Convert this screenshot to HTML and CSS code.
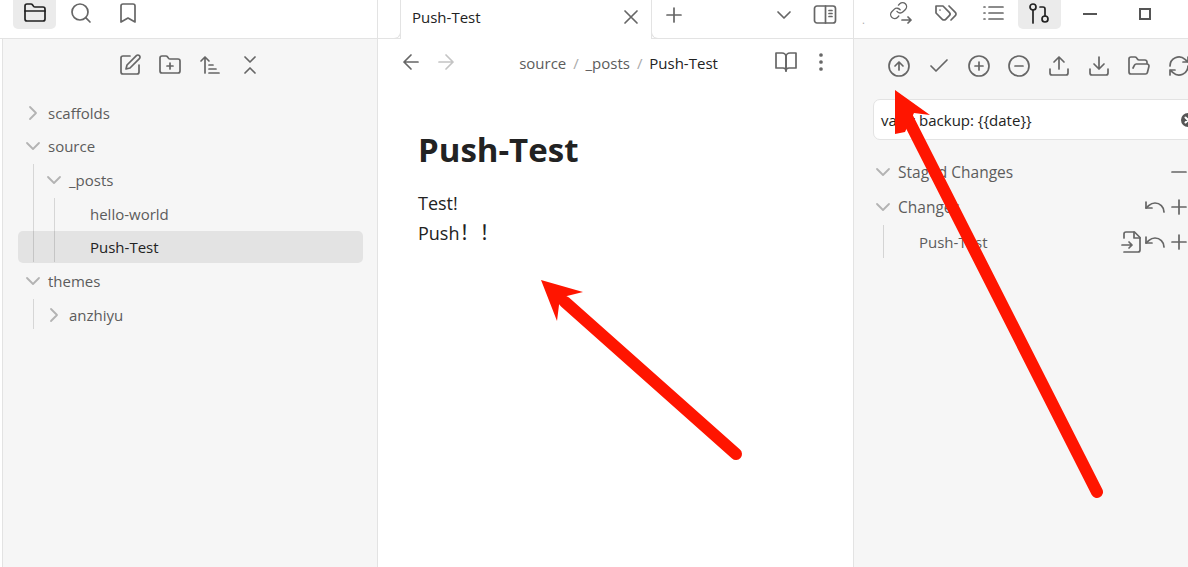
FILE: index.html
```html
<!DOCTYPE html>
<html lang="en">
<head>
  <meta charset="UTF-8" />
  <title>Push-Test</title>
  <link rel="stylesheet" href="styles.css">
</head>
<body>
  <svg width="0" height="0" class="sprites">
    <symbol id="i-folder" viewBox="0 0 24 24"><path d="M20 20a2 2 0 0 0 2-2V8a2 2 0 0 0-2-2h-7.900a2 2 0 0 1-1.690-.9L9.600 3.900A2 2 0 0 0 7.930 3H4a2 2 0 0 0-2 2v13a2 2 0 0 0 2 2Z"/><path d="M2 10h20"/></symbol>
    <symbol id="i-search" viewBox="0 0 24 24"><circle cx="11" cy="11" r="8"/><path d="m21 21-4.300-4.300"/></symbol>
    <symbol id="i-bookmark" viewBox="0 0 24 24"><path d="m19 21-7-4-7 4V5a2 2 0 0 1 2-2h10a2 2 0 0 1 2 2v16z"/></symbol>
    <symbol id="i-edit" viewBox="0 0 24 24"><path d="M12 3H5a2 2 0 0 0-2 2v14a2 2 0 0 0 2 2h14a2 2 0 0 0 2-2v-7"/><path d="M18.375 2.625a2.121 2.121 0 1 1 3 3L12 15l-4 1 1-4Z"/></symbol>
    <symbol id="i-folder-plus" viewBox="0 0 24 24"><path d="M20 20a2 2 0 0 0 2-2V8a2 2 0 0 0-2-2h-7.900a2 2 0 0 1-1.690-.9L9.600 3.900A2 2 0 0 0 7.930 3H4a2 2 0 0 0-2 2v13a2 2 0 0 0 2 2Z"/><path d="M12 10v6M9 13h6"/></symbol>
    <symbol id="i-sort" viewBox="0 0 24 24"><path d="m3 8 4-4 4 4M7 4v16M11 12h4M11 16h7M11 20h10"/></symbol>
    <symbol id="i-collapse" viewBox="0 0 24 24"><path d="m7 20 5-5 5 5M7 4l5 5 5-5"/></symbol>
    <symbol id="i-chev-down" viewBox="0 0 24 24"><path d="m6 9 6 6 6-6"/></symbol>
    <symbol id="i-chev-right" viewBox="0 0 24 24"><path d="m9 6 6 6-6 6"/></symbol>
    <symbol id="i-x" viewBox="0 0 24 24"><path d="M18 6 6 18M6 6l12 12"/></symbol>
    <symbol id="i-plus" viewBox="0 0 24 24"><path d="M5 12h14M12 5v14"/></symbol>
    <symbol id="i-minus" viewBox="0 0 24 24"><path d="M5 12h14"/></symbol>
    <symbol id="i-sidebar" viewBox="0 0 24 24"><rect x="1.500" y="3" width="21" height="17" rx="2.500"/><path d="M12.500 3v17M16 7.500h3M16 10.500h3M16 13.500h3"/></symbol>
    <symbol id="i-left" viewBox="0 0 24 24"><path d="m12 19-7-7 7-7M19 12H5"/></symbol>
    <symbol id="i-right" viewBox="0 0 24 24"><path d="M5 12h14M12 5l7 7-7 7"/></symbol>
    <symbol id="i-book" viewBox="0 0 24 24"><path d="M2 3h6a4 4 0 0 1 4 4v14a3 3 0 0 0-3-3H2z"/><path d="M22 3h-6a4 4 0 0 0-4 4v14a3 3 0 0 1 3-3h7z"/></symbol>
    <symbol id="i-more" viewBox="0 0 24 24"><circle cx="12" cy="5" r="1"/><circle cx="12" cy="12" r="1"/><circle cx="12" cy="19" r="1"/></symbol>
    <symbol id="i-link" viewBox="0 0 24 24"><g transform="translate(1 0) scale(.8)"><path d="M10 13a5 5 0 0 0 7.540.54l3-3a5 5 0 0 0-7.070-7.070l-1.720 1.710"/><path d="M14 11a5 5 0 0 0-7.540-.54l-3 3a5 5 0 0 0 7.070 7.070l1.710-1.710"/></g><path d="M14 19h9M20 16l3 3-3 3"/></symbol>
    <symbol id="i-tags" viewBox="0 0 24 24"><path d="M9 5H2v7l6.290 6.290c.94.94 2.480.94 3.420 0l3.580-3.580c.94-.94.94-2.480 0-3.420L9 5Z"/><path d="M6 9.010V9"/><path d="m15 5 6.300 6.300a2.400 2.400 0 0 1 0 3.400L17 19"/></symbol>
    <symbol id="i-list" viewBox="0 0 24 24"><path d="M8 6h14M8 12h14M8 18h14M3 6h1M3 12h1M3 18h1"/></symbol>
    <symbol id="i-branch" viewBox="0 0 24 24"><circle cx="6" cy="6" r="3"/><path d="M6 9v13"/><circle cx="18" cy="18" r="3"/><path d="M13 6h3a2 2 0 0 1 2 2v7"/></symbol>
    <symbol id="i-up-circle" viewBox="0 0 24 24"><circle cx="12" cy="12" r="10"/><path d="m16 12-4-4-4 4M12 16V8"/></symbol>
    <symbol id="i-check" viewBox="0 0 24 24"><path d="M20 6 9 17l-5-5"/></symbol>
    <symbol id="i-plus-circle" viewBox="0 0 24 24"><circle cx="12" cy="12" r="10"/><path d="M8 12h8M12 8v8"/></symbol>
    <symbol id="i-minus-circle" viewBox="0 0 24 24"><circle cx="12" cy="12" r="10"/><path d="M8 12h8"/></symbol>
    <symbol id="i-upload" viewBox="0 0 24 24"><path d="M21 15v4a2 2 0 0 1-2 2H5a2 2 0 0 1-2-2v-4M17 8l-5-5-5 5M12 3v12"/></symbol>
    <symbol id="i-download" viewBox="0 0 24 24"><path d="M21 15v4a2 2 0 0 1-2 2H5a2 2 0 0 1-2-2v-4M7 10l5 5 5-5M12 15V3"/></symbol>
    <symbol id="i-folder-open" viewBox="0 0 24 24"><path d="m6 14 1.500-2.900A2 2 0 0 1 9.240 10H20a2 2 0 0 1 1.940 2.500l-1.540 6a2 2 0 0 1-1.950 1.500H4a2 2 0 0 1-2-2V5a2 2 0 0 1 2-2h3.900a2 2 0 0 1 1.690.9l.81 1.200a2 2 0 0 0 1.670.9H18a2 2 0 0 1 2 2v2"/></symbol>
    <symbol id="i-refresh" viewBox="0 0 24 24"><path d="M3 12a9 9 0 0 1 15-6.700L21 8M21 3v5h-5M21 12a9 9 0 0 1-15 6.700L3 16M8 16H3v5"/></symbol>
    <symbol id="i-undo" viewBox="0 0 24 24"><path d="M3 7v6h6"/><path d="M21 17a9 9 0 0 0-9-9 9 9 0 0 0-6 2.300L3 13"/></symbol>
    <symbol id="i-file-in" viewBox="0 0 24 24"><path d="M4 22h14a2 2 0 0 0 2-2V7.500L14.500 2H6a2 2 0 0 0-2 2v4"/><path d="M14 2v6h6M2 15h10M9 18l3-3-3-3"/></symbol>
    <symbol id="i-clear" viewBox="0 0 16 16"><circle cx="8" cy="8" r="8"/><path d="m5.500 5.500 5 5M10.500 5.500l-5 5"/></symbol>
  </svg>

  <div class="app">
    <aside class="left">
      <div class="topbar left-tabs">
        <span class="tool active"><svg class="ic dark"><use href="#i-folder"/></svg></span>
        <span class="tool"><svg class="ic"><use href="#i-search"/></svg></span>
        <span class="tool"><svg class="ic"><use href="#i-bookmark"/></svg></span>
      </div>
      <div class="left-body">
        <div class="file-actions">
          <svg class="ic"><use href="#i-edit"/></svg>
          <svg class="ic"><use href="#i-folder-plus"/></svg>
          <svg class="ic"><use href="#i-sort"/></svg>
          <svg class="ic"><use href="#i-collapse"/></svg>
        </div>
        <div class="tree">
          <div class="row"><svg class="chev"><use href="#i-chev-right"/></svg>scaffolds</div>
          <div class="row"><svg class="chev"><use href="#i-chev-down"/></svg>source</div>
          <div class="kids">
            <div class="row"><svg class="chev"><use href="#i-chev-down"/></svg>_posts</div>
            <div class="kids files">
              <div class="row file">hello-world</div>
              <div class="row file selected">Push-Test</div>
            </div>
          </div>
          <div class="row"><svg class="chev"><use href="#i-chev-down"/></svg>themes</div>
          <div class="kids">
            <div class="row"><svg class="chev"><use href="#i-chev-right"/></svg>anzhiyu</div>
          </div>
        </div>
      </div>
    </aside>

    <main class="center">
      <div class="topbar tabstrip">
        <div class="tab">
          <span class="tab-title">Push-Test</span>
          <svg class="ic"><use href="#i-x"/></svg>
        </div>
        <svg class="ic plus"><use href="#i-plus"/></svg>
        <svg class="ic tab-list"><use href="#i-chev-down"/></svg>
        <svg class="ic"><use href="#i-sidebar"/></svg>
      </div>
      <div class="navbar">
        <svg class="ic"><use href="#i-left"/></svg>
        <svg class="ic faded"><use href="#i-right"/></svg>
        <div class="crumbs">source <i>/</i> _posts <i>/</i> <b>Push-Test</b></div>
        <svg class="ic"><use href="#i-book"/></svg>
        <svg class="ic"><use href="#i-more"/></svg>
      </div>
      <article class="doc">
        <h1>Push-Test</h1>
        <p>Test!</p>
        <p>Push<span class="wide">！！</span></p>
      </article>
    </main>

    <aside class="right">
      <div class="topbar right-tabs">
        <span class="dot">.</span>
        <span class="tool"><svg class="ic"><use href="#i-link"/></svg></span>
        <span class="tool"><svg class="ic"><use href="#i-tags"/></svg></span>
        <span class="tool"><svg class="ic"><use href="#i-list"/></svg></span>
        <span class="tool active"><svg class="ic dark"><use href="#i-branch"/></svg></span>
        <span class="win"><span class="win-min"></span></span>
        <span class="win"><span class="win-max"></span></span>
      </div>
      <div class="right-body">
        <div class="git-actions">
          <svg class="ic"><use href="#i-up-circle"/></svg>
          <svg class="ic"><use href="#i-check"/></svg>
          <svg class="ic"><use href="#i-plus-circle"/></svg>
          <svg class="ic"><use href="#i-minus-circle"/></svg>
          <svg class="ic"><use href="#i-upload"/></svg>
          <svg class="ic"><use href="#i-download"/></svg>
          <svg class="ic"><use href="#i-folder-open"/></svg>
          <svg class="ic"><use href="#i-refresh"/></svg>
        </div>
        <div class="commit">
          <span>vault backup: {{date}}</span>
          <svg class="clear"><use href="#i-clear"/></svg>
        </div>
        <div class="git-row"><svg class="chev"><use href="#i-chev-down"/></svg>Staged Changes
          <span class="git-btns"><svg class="ic"><use href="#i-minus"/></svg></span>
        </div>
        <div class="git-row"><svg class="chev"><use href="#i-chev-down"/></svg>Changes
          <span class="git-btns"><svg class="ic"><use href="#i-undo"/></svg><svg class="ic"><use href="#i-plus"/></svg></span>
        </div>
        <div class="git-kids">
          <div class="git-row file">Push-Test
            <span class="git-btns"><svg class="ic"><use href="#i-file-in"/></svg><svg class="ic"><use href="#i-undo"/></svg><svg class="ic"><use href="#i-plus"/></svg></span>
          </div>
        </div>
      </div>
    </aside>
  </div>

  <!-- red annotation arrows drawn over the screenshot -->
  <svg class="arrows" width="1188" height="567" viewBox="0 0 1188 567">
    <path class="shaft" d="M736 454 565 302"/>
    <path class="head" d="M541 280 583 292 567 296 559 305 557 321Z"/>
    <path class="shaft" d="M1097 492 906 115"/>
    <path class="head" d="M895 90 930 115 914 113 905 132 895 134Z"/>
  </svg>
</body>
</html>
```

FILE: styles.css
```css
* {
  box-sizing: border-box;
}

html, body {
  margin: 0;
  height: 100%;
  overflow: hidden;
}

body {
  font-family: "Open Sans", "Noto Sans", "Noto Sans CJK SC", sans-serif;
  font-size: 15px;
  color: #222;
  background: #fff;
}

.sprites {
  position: absolute;
}

.app {
  display: flex;
  height: 567px;
  width: 1188px;
}

.ic {
  width: 24px;
  height: 24px;
  flex: none;
  fill: none;
  stroke: #666;
  stroke-width: 1.700;
  stroke-linecap: round;
  stroke-linejoin: round;
}

.ic.dark {
  stroke: #222;
}

.chev {
  width: 24px;
  height: 24px;
  margin: 0 -4px;
  flex: none;
  fill: none;
  stroke: #b3b3b3;
  stroke-width: 1.800;
  stroke-linecap: round;
  stroke-linejoin: round;
}

.topbar {
  display: flex;
  align-items: center;
  height: 39px;
  border-bottom: 1px solid #e3e3e3;
  background: #fff;
  flex: none;
}

.tool {
  width: 43px;
  height: 29px;
  margin-top: -10px;
  margin-right: 3.500px;
  flex: none;
  display: flex;
  align-items: center;
  justify-content: center;
  border-radius: 0 0 5px 5px;
}

.tool .ic {
  margin-top: -3px;
}

.tool.active {
  background: #ebebeb;
}

/* left column */
.left {
  width: 378px;
  flex: none;
  display: flex;
  flex-direction: column;
  border-right: 1px solid #e3e3e3;
}

.left-tabs {
  padding-left: 13px;
}

.left-body {
  flex: 1;
  background: #f6f6f6;
  margin-left: 2px;
  border-left: 1px solid #e3e3e3;
  padding: 0 14px 0 15px;
}

.file-actions {
  display: flex;
  justify-content: center;
  gap: 16px;
  height: 52px;
  align-items: center;
  padding-right: 1px;
}

.tree {
  margin-top: 5.700px;
}

.row {
  display: flex;
  align-items: center;
  height: 32px;
  margin-bottom: 1.700px;
  color: #5c5c5c;
  font-size: 15px;
  padding-left: 7px;
  border-radius: 5px;
  gap: 7px;
}

.kids {
  margin-left: 15px;
  padding-left: 21px;
  position: relative;
}

/* indent guides sit on top of the selected row */
.kids::before {
  content: "";
  position: absolute;
  left: 0;
  top: 0;
  bottom: 1.700px;
  width: 1px;
  background: rgba(0, 0, 0, 0.13);
  z-index: 1;
}

.kids .row {
  margin-left: -15px;
}

.kids.files {
  margin-left: 0;
  padding-left: 0;
}

.kids.files .row {
  margin-left: 0;
  padding-left: 36px;
}

.kids.files .row.selected {
  margin-left: -36px;
  padding-left: 72px;
  background: #e3e3e3;
  color: #222;
}

/* middle column */
.center {
  width: 476px;
  flex: none;
  display: flex;
  flex-direction: column;
  border-right: 1px solid #e3e3e3;
}

.tabstrip {
  padding-left: 22px;
  padding-right: 16.500px;
  align-items: flex-start;
}

.tabstrip > .ic {
  margin-top: 3px;
}

.tab {
  width: 252px;
  height: 39px;
  flex: none;
  position: relative;
  background: #fff;
  border-left: 1px solid #e3e3e3;
  border-right: 1px solid #e3e3e3;
  display: flex;
  align-items: center;
  padding: 0 8px 6px 11px;
  justify-content: space-between;
  font-size: 15px;
  color: #222;
}

/* little flares where the tab meets the strip line */
.tab::before,
.tab::after {
  content: "";
  position: absolute;
  bottom: 0;
  width: 7px;
  height: 7px;
  border-bottom: 1px solid #e3e3e3;
}

.tab::before {
  left: -8px;
  border-right: 1px solid #e3e3e3;
  border-bottom-right-radius: 7px;
}

.tab::after {
  right: -8px;
  border-left: 1px solid #e3e3e3;
  border-bottom-left-radius: 7px;
}

.plus {
  margin-left: 10px;
}

.tabstrip > .tab-list {
  margin-left: auto;
  margin-right: 16.500px;
}

.navbar {
  display: flex;
  align-items: center;
  height: 48px;
  padding: 0 20px 0 21px;
  gap: 11px;
}

.navbar .ic {
  margin-top: -2px;
}

.ic.faded {
  stroke: #c4c4c4;
}

.crumbs {
  flex: 1;
  text-align: center;
  color: #5c5c5c;
  font-size: 15px;
  padding-left: 5px;
}

.crumbs i {
  font-style: normal;
  color: #aaa;
  margin: 0 3px;
}

.crumbs b {
  font-weight: 400;
  color: #222;
}

.doc {
  padding: 42px 40px 0;
}

.doc h1 {
  margin: 0 0 17px;
  font-size: 33px;
  line-height: 42px;
  font-weight: 700;
  color: #222;
}

.doc p {
  margin: 0;
  font-size: 18px;
  line-height: 30px;
}

.wide {
  font-size: 20px;
}

/* right column */
.right {
  flex: 1;
  display: flex;
  flex-direction: column;
  min-width: 0;
  overflow: hidden;
}

.right-tabs {
  padding-left: 8px;
}

.dot {
  width: 16px;
  flex: none;
  color: #aaa;
  font-size: 11px;
}

.right-body {
  flex: 1;
  background: #f6f6f6;
  padding: 0 0 0 19px;
  overflow: hidden;
}

.win {
  width: 55px;
  flex: none;
  display: flex;
  justify-content: center;
  align-items: center;
  margin-top: -10px;
  margin-left: -1.500px;
  margin-right: 1.500px;
}

.win-min {
  width: 14px;
  height: 2px;
  background: #555;
}

.win-max {
  width: 12px;
  height: 12px;
  border: 2px solid #555;
}

.git-actions {
  display: flex;
  align-items: center;
  gap: 16px;
  height: 53px;
  padding-left: 14px;
  margin-right: -40px;
}

.commit {
  display: flex;
  justify-content: space-between;
  align-items: center;
  height: 41px;
  margin-top: 7px;
  margin-right: -16px;
  padding: 0 7px;
  background: #fff;
  border: 1px solid #e3e3e3;
  border-radius: 7px;
  font-size: 15px;
  color: #222;
}

.clear {
  width: 16px;
  height: 16px;
  flex: none;
  fill: #555;
  stroke: #fff;
  stroke-width: 2;
  stroke-linecap: round;
}

.git-row {
  display: flex;
  align-items: center;
  height: 35px;
  padding-left: 2px;
  color: #5c5c5c;
  gap: 7px;
  font-size: 15.500px;
}

.commit + .git-row {
  margin-top: 14px;
}

.git-btns {
  margin-left: auto;
  display: flex;
  gap: 0;
  margin-right: -2.500px;
}

.git-btns .ic {
  margin-left: -0.500px;
}

.git-kids {
  margin-left: 10px;
  margin-top: 1px;
  border-left: 1px solid #d4d4d4;
}

.git-row.file {
  height: 33px;
  padding-left: 35px;
  font-size: 15px;
}

/* annotations */
.arrows {
  position: absolute;
  left: 0;
  top: 0;
  pointer-events: none;
}

.shaft {
  fill: none;
  stroke: #ff1500;
  stroke-width: 12;
  stroke-linecap: round;
}

.head {
  fill: #ff1500;
}
```
